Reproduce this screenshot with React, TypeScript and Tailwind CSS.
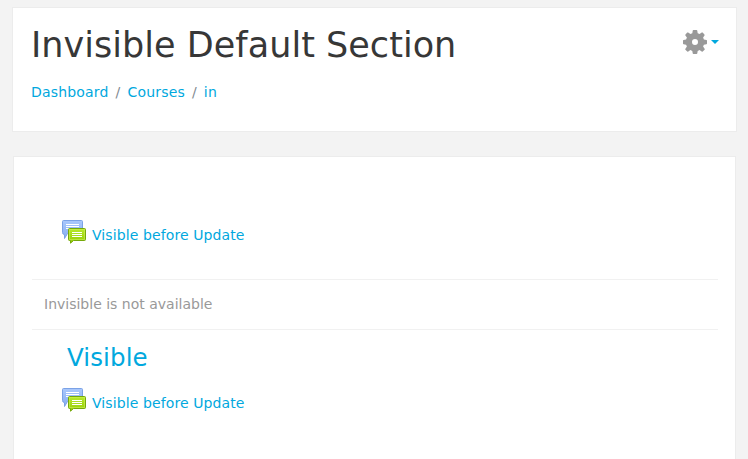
function ForumIcon() {
  return (
    <svg width="24" height="24" viewBox="0 0 24 24" className="shrink-0" aria-hidden="true">
      <defs>
        <linearGradient id="blueBubble" x1="0" y1="0" x2="0" y2="1">
          <stop offset="0" stopColor="#aac8fc" />
          <stop offset="1" stopColor="#86adf0" />
        </linearGradient>
        <linearGradient id="greenBubble" x1="0" y1="0" x2="0" y2="1">
          <stop offset="0" stopColor="#b9ea2c" />
          <stop offset="1" stopColor="#93cc05" />
        </linearGradient>
      </defs>
      <path d="M1.500 .5H19.500Q20.500 .5 20.500 1.500V13.500H5.500L2.500 18.500V14.500Q.5 14.500 .5 12.500V1.500Q.5 .5 1.500 .5Z" fill="url(#blueBubble)" stroke="#7ba2e6" />
      <path d="M4 4.500H17M4 6.500H17M4 8.500H17" stroke="#fff" />
      <path d="M7.500 8.500H22.500Q23.500 8.500 23.500 9.500V19.500Q23.500 20.500 22.500 20.500H11.500L8.500 23.200V20.500H7.500Q6.500 20.500 6.500 19.500V9.500Q6.500 8.500 7.500 8.500Z" fill="url(#greenBubble)" stroke="#75a80a" />
      <path d="M7.500 19.500V9.500H22.500V19.500Z" fill="none" stroke="#c9f050" strokeOpacity=".65" />
      <path d="M10 12.500H20M10 14.500H20M10 16.500H20" stroke="#fff" />
    </svg>
  );
}

function GearIcon() {
  return (
    <svg width="24" height="24" viewBox="0 0 24 24" fill="#999" aria-hidden="true">
      <path
        fillRule="evenodd"
        d="M10.500 0h3q.7 0 .8.7l.4 2.600 1.900.8L18.700 2.600q.5-.4 1 0l1.700 1.800q.5.5.1 1L20.100 7.500l.8 2 2.500.4q.6.100.6.7v3q0 .6-.6.7l-2.500.4-.8 1.900 1.500 2.100q.4.500 0 1l-1.900 1.800q-.5.500-1 .1l-2.100-1.500-1.900.8-.4 2.400q-.1.700-.8.700h-3q-.7 0-.8-.7l-.4-2.400-1.900-.8-2.100 1.500q-.5.400-1-.1l-1.900-1.800q-.4-.5 0-1l1.500-2.100-.8-1.900-2.500-.4Q0 14.200 0 13.600v-3q0-.6.600-.7l2.500-.4.8-2-1.500-2.100q-.4-.5.100-1l1.700-1.800q.5-.4 1 0l2.200 1.500 1.900-.8.4-2.600q.1-.7.800-.7ZM12 9a3 3 0 1 0 0 6 3 3 0 0 0 0-6Z"
      />
    </svg>
  );
}

function Activity() {
  return (
    <a href="#" className="flex h-6 items-center gap-1.5">
      <ForumIcon />
      <span className="pt-[7px] tracking-[0.1px]">Visible before Update</span>
    </a>
  );
}

export default function App() {
  return (
    <div className="h-[459px] overflow-hidden bg-[#f3f3f3] pt-[7px] font-['DejaVu_Sans',sans-serif] text-sm leading-[21px] text-[#01a8de]">
      <header className="ml-3 flex h-[125px] w-[725px] justify-between border border-[#ececec] bg-white pr-[17px] pl-[18px]">
        <div>
          <h1 className="mt-4 text-[35px] leading-[42px] tracking-[0.03px] whitespace-nowrap text-[#373737]">Invisible Default Section</h1>
          <nav className="mt-4 flex tracking-[0.18px]">
            <a href="#">Dashboard</a>
            <span className="mx-[7px] text-[#818a91]">/</span>
            <a href="#">Courses</a>
            <span className="mx-[7px] text-[#818a91]">/</span>
            <a href="#">in</a>
          </nav>
        </div>
        <button className="mt-[22px] flex h-6 items-center gap-1" aria-label="Actions">
          <GearIcon />
          <svg width="8" height="4" viewBox="0 0 8 4" fill="#01a8de"><path d="M0 0H8L4 4Z" /></svg>
        </button>
      </header>
      <main className="mt-6 ml-[13px] h-[320px] w-[723px] border border-[#ececec] bg-white pr-[17px] pl-[18px]">
        <section className="h-[122px] pt-[63px] pl-[30px]"><Activity /></section>
        <section className="h-[50px] border-t border-[#f1f1f1] pt-[14px] pl-3 text-[#999]">Invisible is not available</section>
        <section className="border-t border-[#f1f1f1] pl-[30px]">
          <h3 className="mt-[13px] ml-[5px] text-[24.500px] leading-[29px] tracking-[0.1px]"><a href="#">Visible</a></h3>
          <div className="mt-4"><Activity /></div>
        </section>
      </main>
    </div>
  );
}
